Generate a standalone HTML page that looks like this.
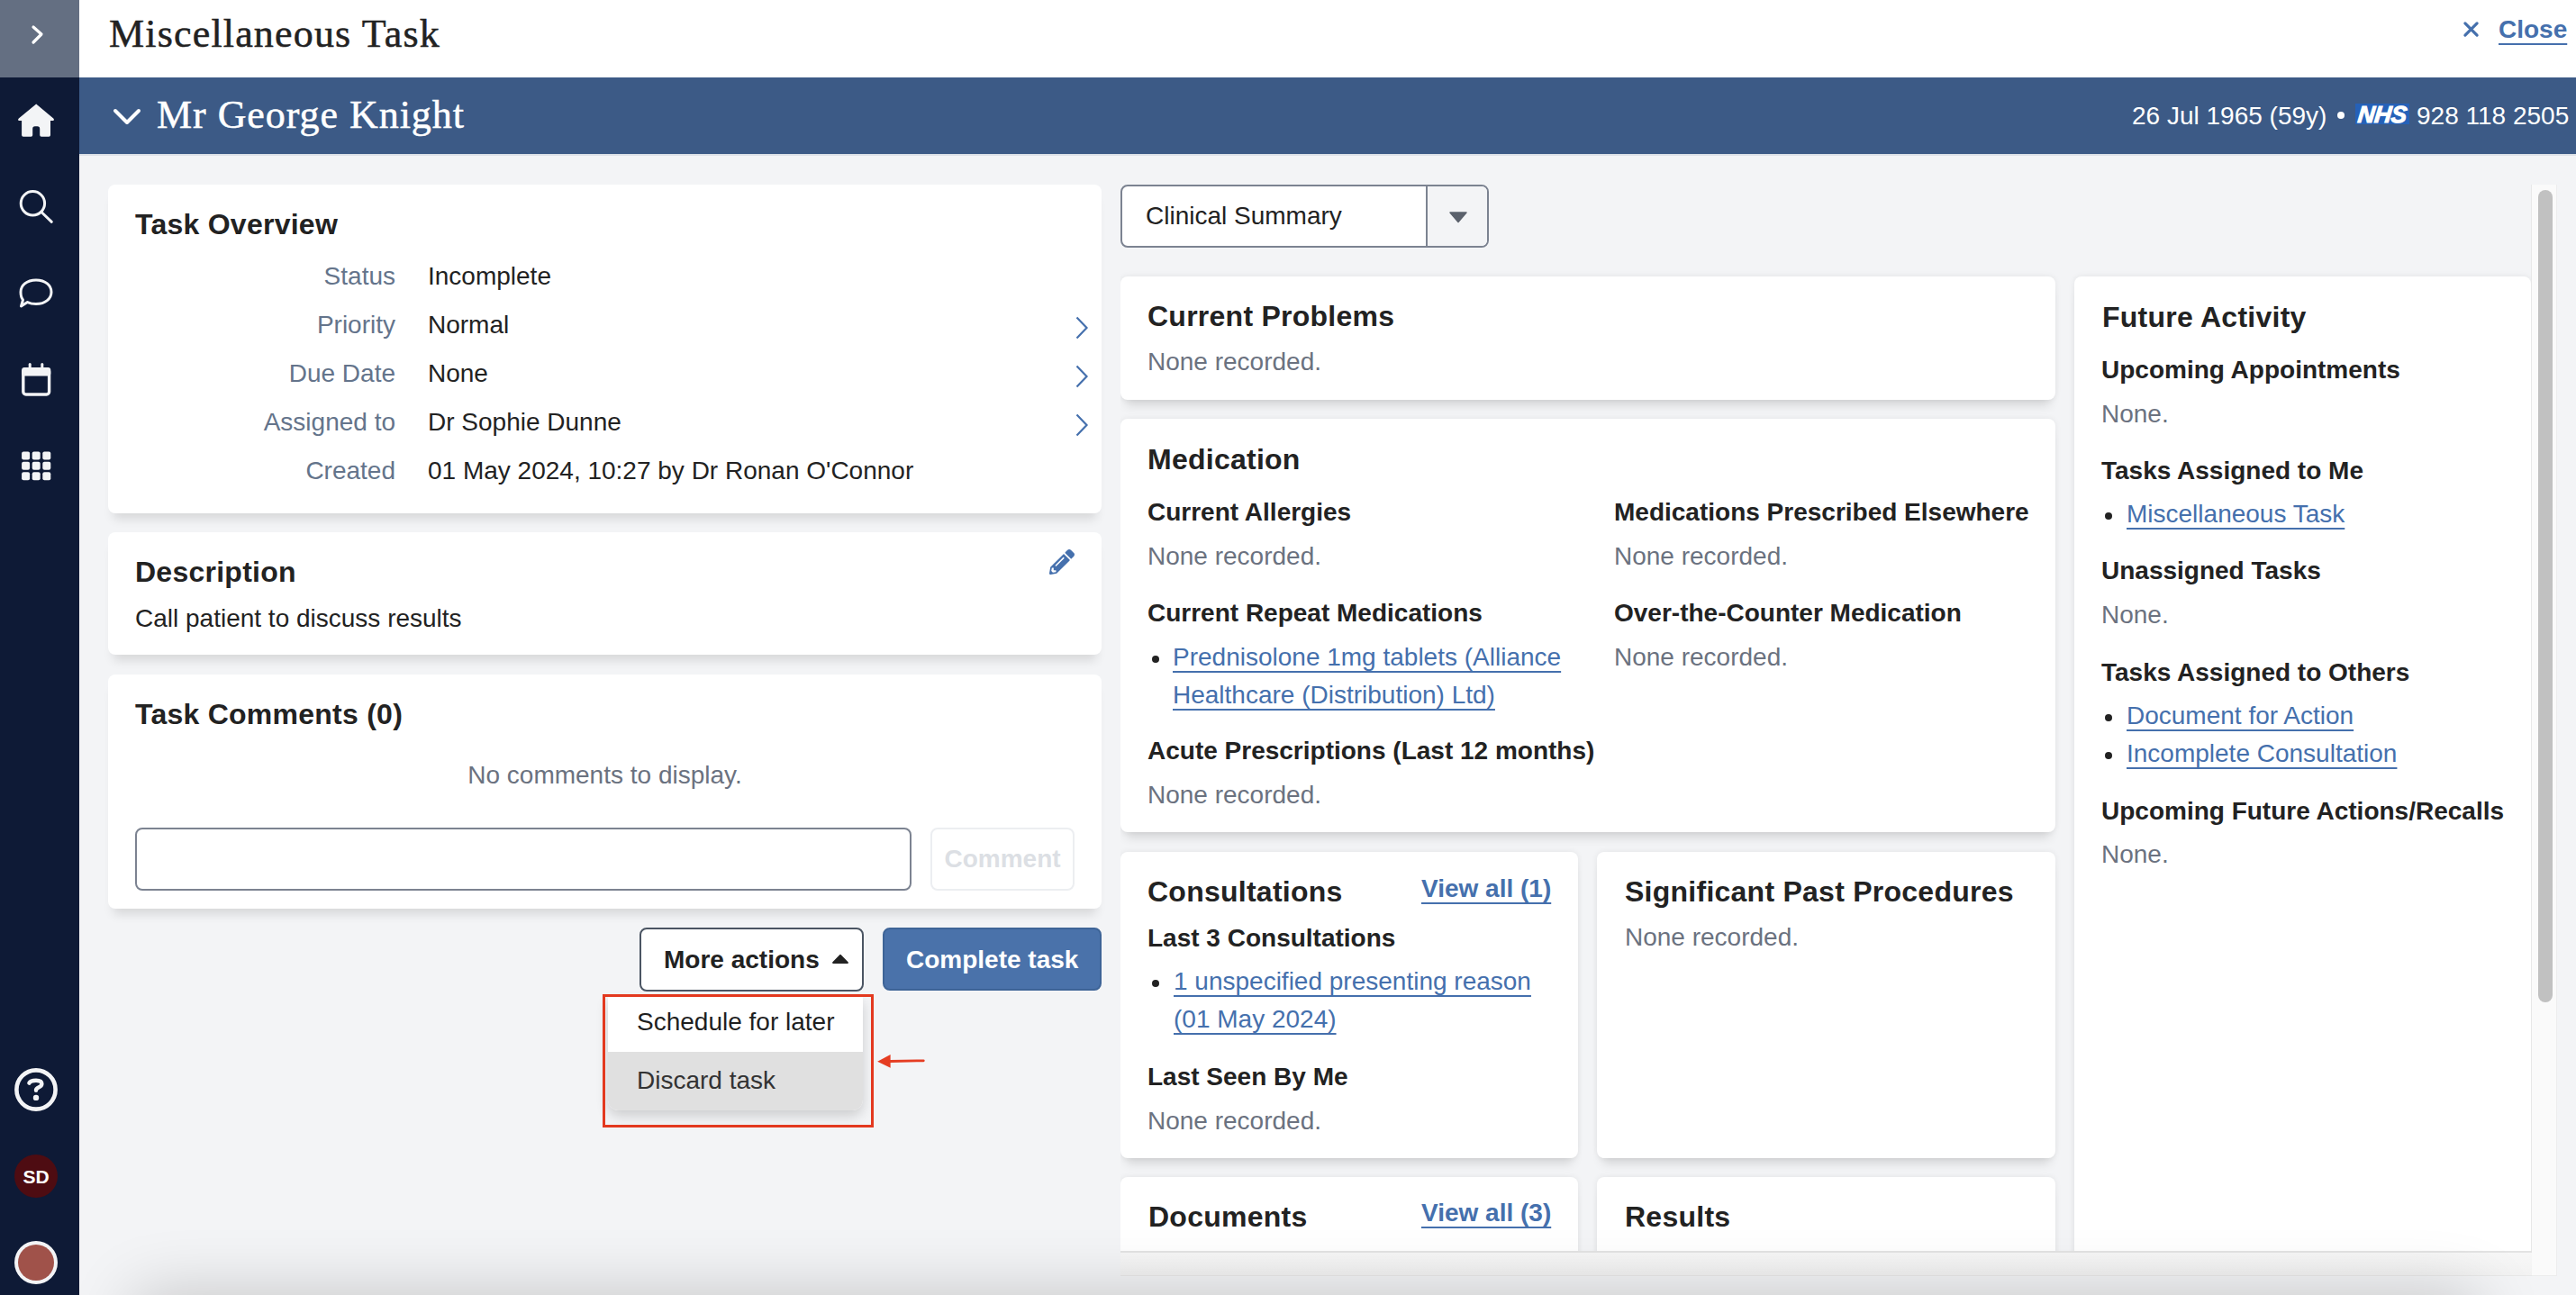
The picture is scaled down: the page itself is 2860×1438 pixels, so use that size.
<!DOCTYPE html>
<html><head><meta charset="utf-8"><title>Miscellaneous Task</title>
<style>
html,body{margin:0;padding:0;width:2860px;height:1438px;overflow:hidden;background:#f3f4f6;font-family:"Liberation Sans",sans-serif;}
.r{position:absolute;}
.t{position:absolute;white-space:nowrap;line-height:40px;font-size:28px;font-family:"Liberation Sans",sans-serif;}
svg.r{overflow:visible}
</style></head><body>
<div class="r" style="left:0px;top:0px;width:88px;height:1438px;background:#0e1a36"></div>
<div class="r" style="left:0px;top:0px;width:88px;height:86px;background:#646f82"></div>
<div class="r" style="left:88px;top:0px;width:2772px;height:86px;background:#fff"></div>
<div class="r" style="left:88px;top:86px;width:2772px;height:85px;background:#3c5a86"></div>
<div class="r" style="left:88px;top:171px;width:2772px;height:2px;background:#dde1e7"></div>
<svg class="r" style="left:0;top:0" width="88" height="1438" viewBox="0 0 88 1438">
<polyline points="37,30 46,38 37,47" fill="none" stroke="#fff" stroke-width="3.2" stroke-linecap="round" stroke-linejoin="round"/>
<path d="M40.2 115.5 L59.3 131.5 Q61 133.6 58.5 134 L56 134 L56 150 Q56 151.7 54.3 151.7 L46 151.7 Q44.2 151.7 44.2 150 L44.2 143 Q44.2 140.2 41.5 140.2 L38.8 140.2 Q36.2 140.2 36.2 143 L36.2 150 Q36.2 151.7 34.5 151.7 L25.8 151.7 Q24.1 151.7 24.1 150 L24.1 134 L21.5 134 Q19 133.6 20.8 131.5 Z" fill="#f3f4f6"/>
<circle cx="36.4" cy="225.8" r="13.2" fill="none" stroke="#f3f4f6" stroke-width="3"/>
<line x1="46" y1="235.5" x2="57.3" y2="246.3" stroke="#f3f4f6" stroke-width="3" stroke-linecap="round"/>
<path d="M40 311 C50.5 311 57 317 57 324.3 C57 331.6 50.5 337.6 40 337.6 C36 337.6 33 336.8 30.5 335.6 L23.5 340 L25.5 333 C23.5 330.8 23 328 23 324.3 C23 317 29.5 311 40 311 Z" fill="none" stroke="#f3f4f6" stroke-width="3" stroke-linejoin="round"/>
<rect x="25.8" y="409.8" width="28.8" height="28.2" rx="3" fill="none" stroke="#f3f4f6" stroke-width="3.4"/>
<rect x="24.1" y="408.1" width="32.2" height="9.5" rx="3" fill="#f3f4f6"/>
<line x1="33.2" y1="404.5" x2="33.2" y2="410" stroke="#f3f4f6" stroke-width="3" stroke-linecap="round"/>
<line x1="46.8" y1="404.5" x2="46.8" y2="410" stroke="#f3f4f6" stroke-width="3" stroke-linecap="round"/>
<rect x="24.1" y="501.4" width="9" height="9" rx="2" fill="#f3f4f6"/><rect x="24.1" y="512.8" width="9" height="9" rx="2" fill="#f3f4f6"/><rect x="24.1" y="524.2" width="9" height="9" rx="2" fill="#f3f4f6"/><rect x="35.7" y="501.4" width="9" height="9" rx="2" fill="#f3f4f6"/><rect x="35.7" y="512.8" width="9" height="9" rx="2" fill="#f3f4f6"/><rect x="35.7" y="524.2" width="9" height="9" rx="2" fill="#f3f4f6"/><rect x="47.3" y="501.4" width="9" height="9" rx="2" fill="#f3f4f6"/><rect x="47.3" y="512.8" width="9" height="9" rx="2" fill="#f3f4f6"/><rect x="47.3" y="524.2" width="9" height="9" rx="2" fill="#f3f4f6"/>
<circle cx="40" cy="1210" r="21.6" fill="none" stroke="#f3f4f6" stroke-width="4.6"/>
<path d="M32.4 1202.6 C33.6 1200.4 36 1199.8 40 1199.8 C44.6 1199.8 46.4 1201.4 46.4 1203.6 C46.4 1205.6 45 1206.6 42.8 1207.6 C40.8 1208.5 40 1209.6 40 1210.8" fill="none" stroke="#f3f4f6" stroke-width="4.4" stroke-linecap="round" stroke-linejoin="round"/>
<circle cx="40" cy="1218.9" r="3.2" fill="#f3f4f6"/>
<circle cx="40" cy="1306" r="24" fill="#4e0c12"/>
<circle cx="40" cy="1402" r="24" fill="#f3f4f6"/>
<circle cx="40" cy="1402" r="20" fill="#a0524a"/>
</svg>
<div class="t" style="left:0;width:80px;text-align:center;top:1286.5px;font-size:21px;font-weight:700;color:#fff">SD</div>
<div class="t " style="left:121px;top:18px;font-size:44px;font-weight:400;color:#222;font-family:'Liberation Serif',serif;letter-spacing:1.17px;-webkit-text-stroke:0.5px #222">Miscellaneous Task</div>
<svg class="r" style="left:2733px;top:22px" width="21" height="21" viewBox="0 0 21 21"><path d="M3.9 3.9 L17.1 17.1 M17.1 3.9 L3.9 17.1" stroke="#4570ad" stroke-width="3.2" stroke-linecap="round"/></svg>
<div class="t " style="left:2774px;top:12.5px;font-size:28px;font-weight:700;color:#4570ad;font-family:'Liberation Sans',sans-serif;text-decoration:underline;text-decoration-thickness:2px;text-underline-offset:6px;text-decoration-skip-ink:none">Close</div>
<svg class="r" style="left:122px;top:117px" width="38" height="26" viewBox="0 0 38 26"><polyline points="6,6 19,19 32,6" fill="none" stroke="#fff" stroke-width="4" stroke-linecap="round" stroke-linejoin="round"/></svg>
<div class="t " style="left:174px;top:108px;font-size:44px;font-weight:400;color:#fff;font-family:'Liberation Serif',serif;letter-spacing:0.95px;-webkit-text-stroke:0.5px #fff">Mr George Knight</div>
<div class="t " style="left:2367px;top:109px;font-size:28px;font-weight:400;color:#fff;font-family:'Liberation Sans',sans-serif;">26 Jul 1965 (59y)</div>
<div class="r" style="left:2595px;top:124px;width:8px;height:8px;background:#fff;border-radius:50%"></div>
<div class="r" style="left:2615px;top:115px;width:60px;height:23px;background:#2561b8"></div>
<div class="t" style="left:2617px;top:107px;font-size:26px;font-weight:700;color:#fff;font-style:italic;letter-spacing:-0.3px;-webkit-text-stroke:1.1px #fff;transform:skewX(-6deg);transform-origin:0 29px">NHS</div>
<div class="t " style="left:2683px;top:109px;font-size:28px;font-weight:400;color:#fff;font-family:'Liberation Sans',sans-serif;">928 118 2505</div>
<div class="r" style="left:120px;top:205px;width:1103px;height:365px;background:#fff;border-radius:8px;box-shadow:0 12px 12px -6px rgba(0,0,0,0.12);"></div>
<div class="t " style="left:150px;top:229px;font-size:32px;font-weight:700;color:#222222;font-family:'Liberation Sans',sans-serif;letter-spacing:0.25px;">Task Overview</div>
<div class="t" style="left:139px;width:300px;text-align:right;top:287px;color:#64748b">Status</div>
<div class="t " style="left:475px;top:287px;font-size:28px;font-weight:400;color:#222222;font-family:'Liberation Sans',sans-serif;">Incomplete</div>
<div class="t" style="left:139px;width:300px;text-align:right;top:341px;color:#64748b">Priority</div>
<div class="t " style="left:475px;top:341px;font-size:28px;font-weight:400;color:#222222;font-family:'Liberation Sans',sans-serif;">Normal</div>
<div class="t" style="left:139px;width:300px;text-align:right;top:395px;color:#64748b">Due Date</div>
<div class="t " style="left:475px;top:395px;font-size:28px;font-weight:400;color:#222222;font-family:'Liberation Sans',sans-serif;">None</div>
<div class="t" style="left:139px;width:300px;text-align:right;top:449px;color:#64748b">Assigned to</div>
<div class="t " style="left:475px;top:449px;font-size:28px;font-weight:400;color:#222222;font-family:'Liberation Sans',sans-serif;">Dr Sophie Dunne</div>
<div class="t" style="left:139px;width:300px;text-align:right;top:503px;color:#64748b">Created</div>
<div class="t " style="left:475px;top:503px;font-size:28px;font-weight:400;color:#222222;font-family:'Liberation Sans',sans-serif;">01 May 2024, 10:27 by Dr Ronan O'Connor</div>
<svg class="r" style="left:1190px;top:348px" width="22" height="32" viewBox="0 0 22 32"><polyline points="5.5,4.5 16.5,16 5.5,27.5" fill="none" stroke="#4570ad" stroke-width="2.2"/></svg>
<svg class="r" style="left:1190px;top:402px" width="22" height="32" viewBox="0 0 22 32"><polyline points="5.5,4.5 16.5,16 5.5,27.5" fill="none" stroke="#4570ad" stroke-width="2.2"/></svg>
<svg class="r" style="left:1190px;top:456px" width="22" height="32" viewBox="0 0 22 32"><polyline points="5.5,4.5 16.5,16 5.5,27.5" fill="none" stroke="#4570ad" stroke-width="2.2"/></svg>
<div class="r" style="left:120px;top:591px;width:1103px;height:136px;background:#fff;border-radius:8px;box-shadow:0 12px 12px -6px rgba(0,0,0,0.12);"></div>
<div class="t " style="left:150px;top:615px;font-size:32px;font-weight:700;color:#222222;font-family:'Liberation Sans',sans-serif;letter-spacing:0.25px;">Description</div>
<div class="t " style="left:150px;top:667px;font-size:28px;font-weight:400;color:#222222;font-family:'Liberation Sans',sans-serif;">Call patient to discuss results</div>
<svg class="r" style="left:1165px;top:610px" width="28" height="28" viewBox="0 0 512 512"><path fill="#4570ad" d="M497.9 142.1l-46.1 46.1c-4.7 4.7-12.3 4.7-17 0l-111-111c-4.7-4.7-4.7-12.3 0-17l46.1-46.1c18.7-18.7 49.1-18.7 67.9 0l60.1 60.1c18.8 18.7 18.8 49.1 0 67.9zM284.2 99.8L21.6 362.4.4 483.9c-2.9 16.4 11.4 30.6 27.8 27.8l121.5-21.3 262.6-262.6c4.7-4.7 4.7-12.3 0-17l-111-111c-4.8-4.7-12.4-4.7-17.1 0zM124.1 339.9c-5.5-5.5-5.5-14.3 0-19.8l154-154c5.5-5.5 14.3-5.5 19.8 0s5.5 14.3 0 19.8l-154 154c-5.5 5.5-14.3 5.5-19.8 0zM88 424h48v36.3l-64.5 11.3-31.1-31.1L51.7 376H88v48z"/></svg>
<div class="r" style="left:120px;top:749px;width:1103px;height:260px;background:#fff;border-radius:8px;box-shadow:0 12px 12px -6px rgba(0,0,0,0.12);"></div>
<div class="t " style="left:150px;top:773px;font-size:32px;font-weight:700;color:#222222;font-family:'Liberation Sans',sans-serif;letter-spacing:0.25px;">Task Comments (0)</div>
<div class="t" style="left:120px;width:1103px;text-align:center;top:841px;color:#6b7280">No comments to display.</div>
<div class="r" style="left:150px;top:919px;width:862px;height:70px;box-sizing:border-box;border:2px solid #7c8391;border-radius:8px;background:#fff"></div>
<div class="r" style="left:1033px;top:919px;width:160px;height:70px;box-sizing:border-box;border:2px solid #eceef1;border-radius:8px;background:#fff"></div>
<div class="t" style="left:1033px;width:160px;text-align:center;top:934px;font-weight:700;color:#dcdfe4">Comment</div>
<div class="r" style="left:710px;top:1030px;width:249px;height:71px;box-sizing:border-box;border:2px solid #4b5563;border-radius:8px;background:#fff"></div>
<div class="t " style="left:737px;top:1046px;font-size:28px;font-weight:700;color:#222222;font-family:'Liberation Sans',sans-serif;">More actions</div>
<svg class="r" style="left:922px;top:1058px" width="22" height="14" viewBox="0 0 22 14"><path d="M3.2 11 L11 3 L18.8 11 Z" fill="#222" stroke="#222" stroke-width="2.2" stroke-linejoin="round"/></svg>
<div class="r" style="left:980px;top:1030px;width:243px;height:70px;box-sizing:border-box;border:2px solid #3e6497;border-radius:8px;background:#4a72aa"></div>
<div class="t " style="left:1006px;top:1046px;font-size:28px;font-weight:700;color:#fff;font-family:'Liberation Sans',sans-serif;">Complete task</div>
<div class="r" style="left:675px;top:1107px;width:283px;height:126px;background:#fff;border-radius:0 0 12px 12px;box-shadow:0 6px 14px rgba(0,0,0,0.16);overflow:hidden"></div>
<div class="r" style="left:675px;top:1168px;width:283px;height:65px;background:#e0e0e0;border-radius:0 0 12px 12px"></div>
<div class="t " style="left:707px;top:1115px;font-size:28px;font-weight:400;color:#1f1f1f;font-family:'Liberation Sans',sans-serif;">Schedule for later</div>
<div class="t " style="left:707px;top:1180px;font-size:28px;font-weight:400;color:#333;font-family:'Liberation Sans',sans-serif;">Discard task</div>
<div class="r" style="left:669px;top:1104px;width:301px;height:148px;box-sizing:border-box;border:3px solid #e3391f"></div>
<svg class="r" style="left:970px;top:1166px" width="62" height="24" viewBox="0 0 62 24"><path d="M4.2 12.7 L18.6 4.9 L18.6 19.8 Z" fill="#e53d22"/><line x1="18" y1="12.5" x2="55.3" y2="11.8" stroke="#e53d22" stroke-width="2.8" stroke-linecap="round"/></svg>
<div class="r" style="left:1244px;top:205px;width:409px;height:70px;box-sizing:border-box;border:2px solid #7c8391;border-radius:8px;background:#fff;overflow:hidden"></div>
<div class="r" style="left:1583px;top:207px;width:68px;height:66px;box-sizing:border-box;background:#f3f4f6;border-left:2px solid #7c8391;border-radius:0 6px 6px 0"></div>
<svg class="r" style="left:1606px;top:232px" width="26" height="18" viewBox="0 0 26 18"><path d="M4 4 L22 4 L13 14.5 Z" fill="#5b616c" stroke="#5b616c" stroke-width="1.5" stroke-linejoin="round"/></svg>
<div class="t " style="left:1272px;top:220px;font-size:28px;font-weight:400;color:#222222;font-family:'Liberation Sans',sans-serif;">Clinical Summary</div>
<div class="r" style="left:1244px;top:205px;width:1566px;height:1184px;overflow:hidden">
<div class="r" style="left:0px;top:102px;width:1038px;height:137px;background:#fff;border-radius:8px;box-shadow:0 12px 12px -6px rgba(0,0,0,0.12),0 0 7px rgba(0,0,0,0.07)"></div>
<div class="t " style="left:30px;top:126px;font-size:32px;font-weight:700;color:#222;font-family:'Liberation Sans',sans-serif;letter-spacing:0.25px;">Current Problems</div>
<div class="t " style="left:30px;top:177px;font-size:28px;font-weight:400;color:#6b7280;font-family:'Liberation Sans',sans-serif;">None recorded.</div>
<div class="r" style="left:0px;top:260px;width:1038px;height:459px;background:#fff;border-radius:8px;box-shadow:0 12px 12px -6px rgba(0,0,0,0.12),0 0 7px rgba(0,0,0,0.07)"></div>
<div class="t " style="left:30px;top:285px;font-size:32px;font-weight:700;color:#222;font-family:'Liberation Sans',sans-serif;letter-spacing:0.25px;">Medication</div>
<div class="t " style="left:30px;top:344px;font-size:28px;font-weight:700;color:#222;font-family:'Liberation Sans',sans-serif;">Current Allergies</div>
<div class="t " style="left:30px;top:393px;font-size:28px;font-weight:400;color:#6b7280;font-family:'Liberation Sans',sans-serif;">None recorded.</div>
<div class="t " style="left:30px;top:456px;font-size:28px;font-weight:700;color:#222;font-family:'Liberation Sans',sans-serif;">Current Repeat Medications</div>
<div class="r" style="left:35px;top:523px;width:8px;height:8px;background:#222;border-radius:50%"></div>
<div class="t" style="left:58px;top:504px;width:450px;line-height:42px;white-space:normal;color:#4570ad;text-decoration:underline;text-decoration-thickness:2px;text-underline-offset:6px;text-decoration-skip-ink:none">Prednisolone 1mg tablets (Alliance Healthcare (Distribution) Ltd)</div>
<div class="t " style="left:30px;top:609px;font-size:28px;font-weight:700;color:#222;font-family:'Liberation Sans',sans-serif;">Acute Prescriptions (Last 12 months)</div>
<div class="t " style="left:30px;top:658px;font-size:28px;font-weight:400;color:#6b7280;font-family:'Liberation Sans',sans-serif;">None recorded.</div>
<div class="t " style="left:548px;top:344px;font-size:28px;font-weight:700;color:#222;font-family:'Liberation Sans',sans-serif;">Medications Prescribed Elsewhere</div>
<div class="t " style="left:548px;top:393px;font-size:28px;font-weight:400;color:#6b7280;font-family:'Liberation Sans',sans-serif;">None recorded.</div>
<div class="t " style="left:548px;top:456px;font-size:28px;font-weight:700;color:#222;font-family:'Liberation Sans',sans-serif;">Over-the-Counter Medication</div>
<div class="t " style="left:548px;top:505px;font-size:28px;font-weight:400;color:#6b7280;font-family:'Liberation Sans',sans-serif;">None recorded.</div>
<div class="r" style="left:0px;top:741px;width:508px;height:340px;background:#fff;border-radius:8px;box-shadow:0 12px 12px -6px rgba(0,0,0,0.12),0 0 7px rgba(0,0,0,0.07)"></div>
<div class="t " style="left:30px;top:765px;font-size:32px;font-weight:700;color:#222;font-family:'Liberation Sans',sans-serif;letter-spacing:0.25px;">Consultations</div>
<div class="t" style="left:334px;top:761px;line-height:42px;white-space:normal;color:#4570ad;text-decoration:underline;text-decoration-thickness:2px;text-underline-offset:6px;text-decoration-skip-ink:none"><b>View all (1)</b></div>
<div class="t " style="left:30px;top:817px;font-size:28px;font-weight:700;color:#222;font-family:'Liberation Sans',sans-serif;">Last 3 Consultations</div>
<div class="r" style="left:35px;top:883px;width:8px;height:8px;background:#222;border-radius:50%"></div>
<div class="t" style="left:59px;top:864px;width:420px;line-height:42px;white-space:normal;color:#4570ad;text-decoration:underline;text-decoration-thickness:2px;text-underline-offset:6px;text-decoration-skip-ink:none">1 unspecified presenting reason (01 May 2024)</div>
<div class="t " style="left:30px;top:971px;font-size:28px;font-weight:700;color:#222;font-family:'Liberation Sans',sans-serif;">Last Seen By Me</div>
<div class="t " style="left:30px;top:1020px;font-size:28px;font-weight:400;color:#6b7280;font-family:'Liberation Sans',sans-serif;">None recorded.</div>
<div class="r" style="left:529px;top:741px;width:509px;height:340px;background:#fff;border-radius:8px;box-shadow:0 12px 12px -6px rgba(0,0,0,0.12),0 0 7px rgba(0,0,0,0.07)"></div>
<div class="t " style="left:560px;top:765px;font-size:32px;font-weight:700;color:#222;font-family:'Liberation Sans',sans-serif;letter-spacing:0.25px;">Significant Past Procedures</div>
<div class="t " style="left:560px;top:816px;font-size:28px;font-weight:400;color:#6b7280;font-family:'Liberation Sans',sans-serif;">None recorded.</div>
<div class="r" style="left:0px;top:1102px;width:508px;height:193px;background:#fff;border-radius:8px;box-shadow:0 12px 12px -6px rgba(0,0,0,0.12),0 0 7px rgba(0,0,0,0.07)"></div>
<div class="t " style="left:31px;top:1126px;font-size:32px;font-weight:700;color:#222;font-family:'Liberation Sans',sans-serif;letter-spacing:0.25px;">Documents</div>
<div class="t" style="left:334px;top:1121px;line-height:42px;white-space:normal;color:#4570ad;text-decoration:underline;text-decoration-thickness:2px;text-underline-offset:6px;text-decoration-skip-ink:none"><b>View all (3)</b></div>
<div class="r" style="left:529px;top:1102px;width:509px;height:193px;background:#fff;border-radius:8px;box-shadow:0 12px 12px -6px rgba(0,0,0,0.12),0 0 7px rgba(0,0,0,0.07)"></div>
<div class="t " style="left:560px;top:1126px;font-size:32px;font-weight:700;color:#222;font-family:'Liberation Sans',sans-serif;letter-spacing:0.25px;">Results</div>
<div class="r" style="left:1059px;top:102px;width:507px;height:1193px;background:#fff;border-radius:8px;box-shadow:0 12px 12px -6px rgba(0,0,0,0.12),0 0 7px rgba(0,0,0,0.07)"></div>
<div class="t " style="left:1090px;top:127px;font-size:32px;font-weight:700;color:#222;font-family:'Liberation Sans',sans-serif;letter-spacing:0.25px;">Future Activity</div>
<div class="t " style="left:1089px;top:186px;font-size:28px;font-weight:700;color:#222;font-family:'Liberation Sans',sans-serif;">Upcoming Appointments</div>
<div class="t " style="left:1089px;top:235px;font-size:28px;font-weight:400;color:#6b7280;font-family:'Liberation Sans',sans-serif;">None.</div>
<div class="t " style="left:1089px;top:298px;font-size:28px;font-weight:700;color:#222;font-family:'Liberation Sans',sans-serif;">Tasks Assigned to Me</div>
<div class="r" style="left:1093px;top:364px;width:8px;height:8px;background:#222;border-radius:50%"></div>
<div class="t" style="left:1117px;top:345px;line-height:42px;white-space:normal;color:#4570ad;text-decoration:underline;text-decoration-thickness:2px;text-underline-offset:6px;text-decoration-skip-ink:none">Miscellaneous Task</div>
<div class="t " style="left:1089px;top:409px;font-size:28px;font-weight:700;color:#222;font-family:'Liberation Sans',sans-serif;">Unassigned Tasks</div>
<div class="t " style="left:1089px;top:458px;font-size:28px;font-weight:400;color:#6b7280;font-family:'Liberation Sans',sans-serif;">None.</div>
<div class="t " style="left:1089px;top:522px;font-size:28px;font-weight:700;color:#222;font-family:'Liberation Sans',sans-serif;">Tasks Assigned to Others</div>
<div class="r" style="left:1093px;top:588px;width:8px;height:8px;background:#222;border-radius:50%"></div>
<div class="t" style="left:1117px;top:569px;line-height:42px;white-space:normal;color:#4570ad;text-decoration:underline;text-decoration-thickness:2px;text-underline-offset:6px;text-decoration-skip-ink:none">Document for Action</div>
<div class="r" style="left:1093px;top:630px;width:8px;height:8px;background:#222;border-radius:50%"></div>
<div class="t" style="left:1117px;top:611px;line-height:42px;white-space:normal;color:#4570ad;text-decoration:underline;text-decoration-thickness:2px;text-underline-offset:6px;text-decoration-skip-ink:none">Incomplete Consultation</div>
<div class="t " style="left:1089px;top:676px;font-size:28px;font-weight:700;color:#222;font-family:'Liberation Sans',sans-serif;">Upcoming Future Actions/Recalls</div>
<div class="t " style="left:1089px;top:724px;font-size:28px;font-weight:400;color:#6b7280;font-family:'Liberation Sans',sans-serif;">None.</div>
</div>
<div class="r" style="left:2810px;top:205px;width:29px;height:1212px;box-sizing:border-box;background:#fafafa;border-left:1px solid #e8e8e8;border-right:1px solid #ededed"></div>
<div class="r" style="left:2818px;top:211px;width:16px;height:902px;background:#c1c1c1;border-radius:8px"></div>
<div class="r" style="left:1244px;top:1389px;width:1567px;height:28px;box-sizing:border-box;background:linear-gradient(#f7f7f7,#f2f2f2);border-top:2px solid #e3e3e3;border-bottom:1px solid #e8e8e8"></div>
<div class="r" style="left:2811px;top:1416px;width:28px;height:1px;background:#ececec"></div>
<div class="r" style="left:150px;top:1438px;width:2600px;height:100px;box-shadow:0 0 75px rgba(0,0,0,0.2);background:#ccc"></div>
</body></html>
